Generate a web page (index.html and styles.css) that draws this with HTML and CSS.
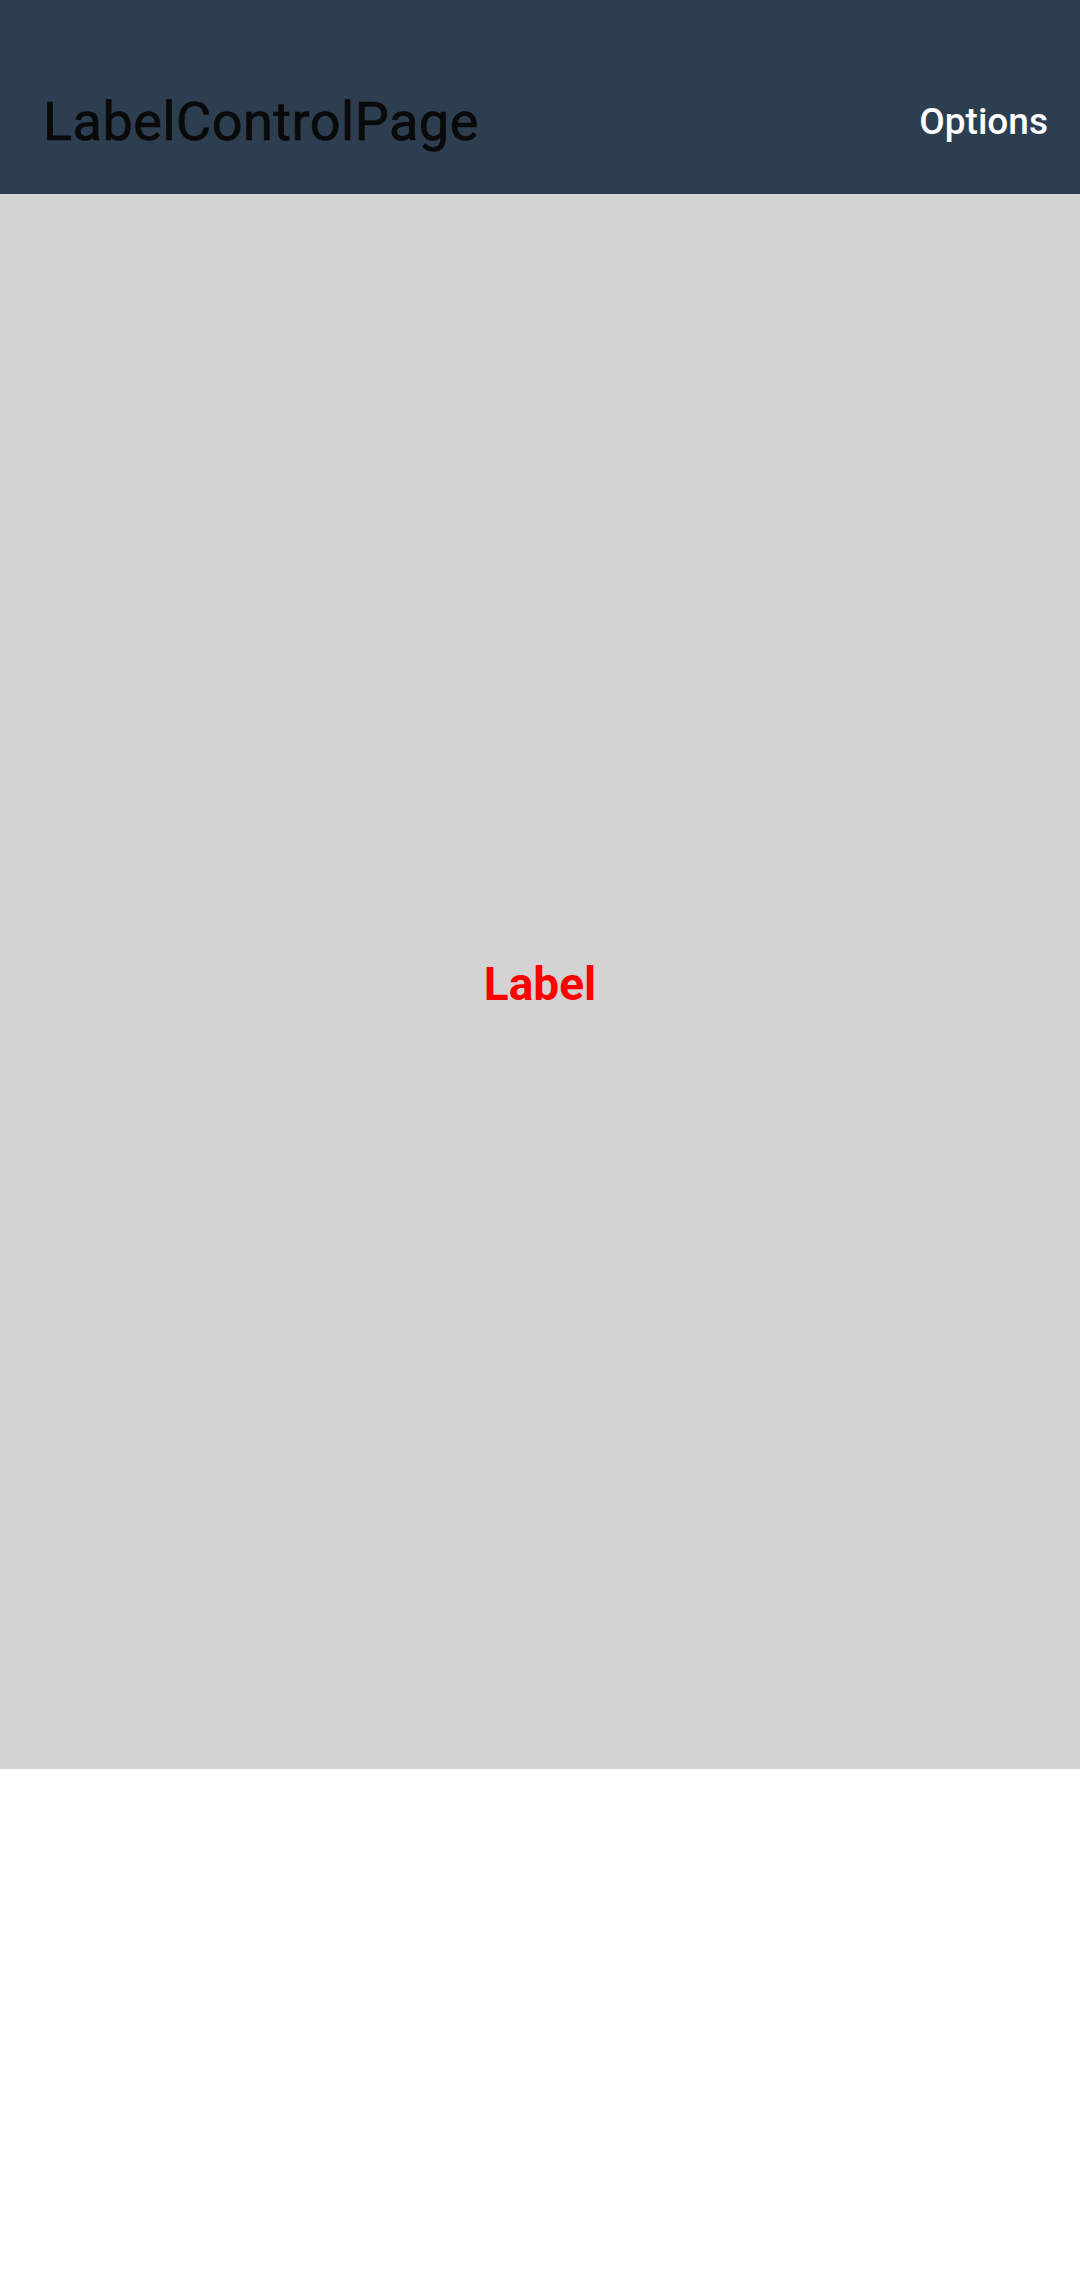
FILE: index.html
```html
<!DOCTYPE html>
<html>
<head>
<meta charset="utf-8">
<link rel="stylesheet" href="styles.css">
</head>
<body>
<div class="app">
  <header class="navbar">
    <div class="title">LabelControlPage</div>
    <div class="options">Options</div>
  </header>
  <main class="content">
    <div class="label">Label</div>
  </main>
</div>
</body>
</html>
```
FILE: styles.css
```css
html, body {
  margin: 0;
  padding: 0;
  background: #ffffff;
  font-family: Roboto, "Noto Sans", sans-serif;
}
.app {
  width: 1080px;
  height: 2289px;
  display: flex;
  flex-direction: column;
}
.navbar {
  height: 194px;
  background: #2c3e50;
  display: flex;
  align-items: flex-end;
  justify-content: space-between;
  padding: 0 32px 0 43px;
  box-sizing: border-box;
}
.title {
  font-size: 54px;
  color: #0a0a0a;
  line-height: 54px;
  padding-bottom: 45px;
  letter-spacing: 0.5px;
  -webkit-text-stroke: 0.7px #0a0a0a;
}
.options {
  font-size: 37px;
  font-weight: 500;
  color: #ffffff;
  line-height: 37px;
  padding-bottom: 54px;
}
.content {
  height: 1575px;
  background: #d3d3d3;
  display: flex;
  align-items: center;
  justify-content: center;
}
.label {
  font-size: 46px;
  font-weight: 700;
  color: #ff0000;
  padding-top: 4px;
}
```
